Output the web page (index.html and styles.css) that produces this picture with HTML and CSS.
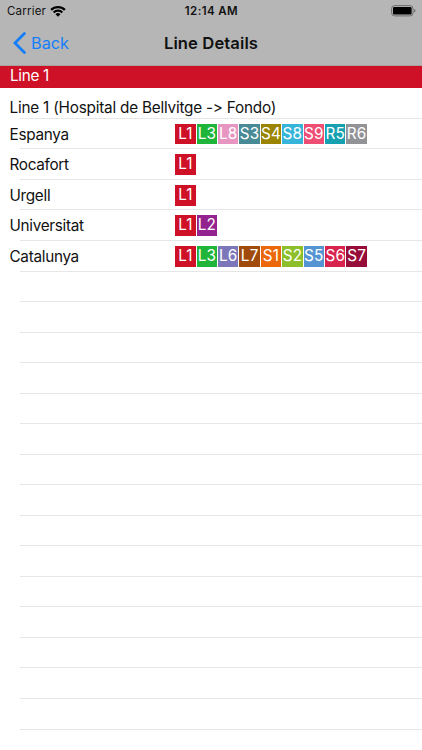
FILE: index.html
```html
<!DOCTYPE html>
<html lang="en">
<head>
  <meta charset="UTF-8">
  <meta name="viewport" content="width=device-width, initial-scale=1.0">
  <title>Line Details</title>
  <link rel="stylesheet" href="styles.css">
</head>
<body>
  <header>
    <div class="status-bar">
      <div class="carrier">
        <span>Carrier</span>
        <svg class="wifi" viewBox="0 0 16 12" width="16" height="12">
          <path d="M0.3 4.1 A11 11 0 0 1 15.7 4.1 L14.1 5.7 A8.7 8.7 0 0 0 1.9 5.7 Z"/>
          <path d="M2.9 6.7 A7.3 7.3 0 0 1 13.1 6.7 L11.5 8.3 A5 5 0 0 0 4.5 8.3 Z"/>
          <path d="M5.5 9.2 A3.6 3.6 0 0 1 10.5 9.2 L8 11.7 Z"/>
        </svg>
      </div>
      <div class="time">12:14 AM</div>
      <svg class="battery" viewBox="0 0 25 12" width="25" height="12">
        <rect x="0.6" y="0.6" width="21.4" height="10.3" rx="3" fill="none" stroke="#6c6c6c"/>
        <rect x="2" y="2" width="18.6" height="7.5" rx="1.3"/>
        <path d="M23.2 4 Q24.6 4.6 24.6 5.8 Q24.6 7 23.2 7.6 Z" fill="#6c6c6c"/>
      </svg>
    </div>
    <nav class="nav-bar">
      <a class="back">
        <svg viewBox="0 0 13 22" width="13" height="22">
          <path d="M11.4 1.6 L2 11 L11.4 20.4" fill="none" stroke="#147efb" stroke-width="2.8" stroke-linecap="round"/>
        </svg>
        <span>Back</span>
      </a>
      <h1>Line Details</h1>
    </nav>
  </header>

  <div class="section-header">Line 1</div>

  <main class="table">
    <div class="row direction">Line 1 (Hospital de Bellvitge -&gt; Fondo)</div>
    <div class="row">
      <span class="station">Espanya</span>
      <div class="lines">
        <span class="l1">L1</span><span class="l3">L3</span><span class="l8">L8</span><span class="s3">S3</span><span class="s4">S4</span><span class="s8">S8</span><span class="s9">S9</span><span class="r5">R5</span><span class="r6">R6</span>
      </div>
    </div>
    <div class="row">
      <span class="station">Rocafort</span>
      <div class="lines"><span class="l1">L1</span></div>
    </div>
    <div class="row">
      <span class="station">Urgell</span>
      <div class="lines"><span class="l1">L1</span></div>
    </div>
    <div class="row">
      <span class="station">Universitat</span>
      <div class="lines"><span class="l1">L1</span><span class="l2">L2</span></div>
    </div>
    <div class="row">
      <span class="station">Catalunya</span>
      <div class="lines">
        <span class="l1">L1</span><span class="l3">L3</span><span class="l6">L6</span><span class="l7">L7</span><span class="s1">S1</span><span class="s2">S2</span><span class="s5">S5</span><span class="s6">S6</span><span class="s7">S7</span>
      </div>
    </div>
    <!-- empty rows -->
    <div class="row"></div>
    <div class="row"></div>
    <div class="row"></div>
    <div class="row"></div>
    <div class="row"></div>
    <div class="row"></div>
    <div class="row"></div>
    <div class="row"></div>
    <div class="row"></div>
    <div class="row"></div>
    <div class="row"></div>
    <div class="row"></div>
    <div class="row"></div>
    <div class="row"></div>
    <div class="row"></div>
  </main>
</body>
</html>
```
FILE: styles.css
```css
* {
  box-sizing: border-box;
}

body {
  margin: 0;
  height: 750px;
  overflow: hidden;
  background: #fff;
  color: #111;
  font-family: Inter, "Liberation Sans", sans-serif;
  font-size: 15.3px;
  font-feature-settings: "calt" 0;
}

header {
  height: 66px;
  background: #b6b6b6;
  border-bottom: 1px solid #a9a0a0;
}

.status-bar {
  display: grid;
  grid-template-columns: 1fr auto 1fr;
  align-items: center;
  height: 22px;
  padding: 0 6px 0 7px;
  font-size: 11.5px;
}

.carrier {
  display: flex;
  align-items: center;
  gap: 4px;
  letter-spacing: 0.2px;
}

.time {
  font-weight: 600;
  letter-spacing: 0.4px;
}

.battery {
  justify-self: end;
}

.nav-bar {
  display: grid;
  grid-template-columns: 1fr auto 1fr;
  align-items: center;
  height: 42px;
  padding: 0 13px;
}

.back {
  display: flex;
  align-items: center;
  gap: 5px;
  color: #147efb;
  font-size: 16.3px;
}

h1 {
  margin: 0;
  font-size: 16.6px;
  font-weight: 600;
  letter-spacing: 0.1px;
}

.section-header {
  height: 22px;
  padding-left: 10px;
  background: #ce1126;
  color: #fff;
  line-height: 19px;
  letter-spacing: -0.3px;
}

.row {
  display: flex;
  align-items: center;
  height: 30.54px;
  padding-left: 9.5px;
  background: linear-gradient(#e6e6e6, #e6e6e6) 20px 100% / 100% 1px no-repeat;
  letter-spacing: -0.3px;
}

.direction {
  height: 30.9px;
  padding-top: 9px;
  letter-spacing: -0.21px;
}

.station {
  width: 165.8px;
}

.lines {
  display: flex;
  gap: 1px;
}

.lines span {
  width: 20.4px;
  height: 20.6px;
  color: #fff;
  line-height: 20.6px;
  text-align: center;
  letter-spacing: 0.2px;
}

.l1 { background: #ce1126; }
.l2 { background: #93248f; }
.l3 { background: #1eb53a; }
.l6 { background: #7c77b9; }
.l7 { background: #a04a0c; }
.l8 { background: #e796c1; }
.s1 { background: #eb690b; }
.s2 { background: #8dbf2a; }
.s3 { background: #488b96; }
.s4 { background: #9a8400; }
.s5 { background: #5594d2; }
.s6 { background: #d8234e; }
.s7 { background: #970d3a; }
.s8 { background: #36b4d9; }
.s9 { background: #ef4e74; }
.r5 { background: #16a0b0; }
.r6 { background: #929397; }
```
